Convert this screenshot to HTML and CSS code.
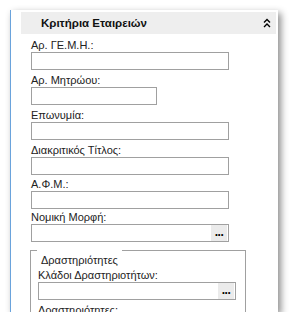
FILE: index.html
```html
<!DOCTYPE html>
<html lang="el">
<head>
    <meta charset="UTF-8">
    <meta name="viewport" content="width=device-width, initial-scale=1.0">
    <title>Κριτήρια Εταιρειών</title>
    <link rel="stylesheet" href="styles.css">
</head>
<body>
    <div class="panel">
        <div class="panel-header">
            <span class="panel-title">Κριτήρια Εταιρειών</span>
            <svg class="collapse-icon" width="8" height="10" viewBox="0 0 8 10">
                <polyline points="1,4.5 4,1.5 7,4.5" />
                <polyline points="1,9 4,6 7,9" />
            </svg>
        </div>

        <div class="panel-body">
            <div class="row">
                <label>Αρ. ΓΕ.Μ.Η.:</label>
                <input type="text" class="field">
            </div>
            <div class="row">
                <label>Αρ. Μητρώου:</label>
                <input type="text" class="field short">
            </div>
            <div class="row">
                <label>Επωνυμία:</label>
                <input type="text" class="field">
            </div>
            <div class="row gap-2">
                <label>Διακριτικός Τίτλος:</label>
                <input type="text" class="field">
            </div>
            <div class="row gap-1">
                <label>Α.Φ.Μ.:</label>
                <input type="text" class="field">
            </div>
            <div class="row">
                <label>Νομική Μορφή:</label>
                <div class="field lookup">
                    <span class="lookup-btn">...</span>
                </div>
            </div>

            <div class="group">
                <div class="group-title">Δραστηριότητες</div>
                <div class="row">
                    <label>Κλάδοι Δραστηριοτήτων:</label>
                    <div class="field lookup">
                        <span class="lookup-btn">...</span>
                    </div>
                </div>
                <div class="row">
                    <label>Δραστηριότητες:</label>
                </div>
            </div>
        </div>
    </div>
</body>
</html>
```

FILE: styles.css
```css
body {
    margin: 0;
    background: #fff;
    font-family: "Liberation Sans", Arial, sans-serif;
    font-size: 11px;
    color: #222;
}

.panel {
    margin: 10px 0 0 10px;
    width: 267px;
    height: 300px;
    padding-top: 2px;
    background: #fff;
    border-left: 1px solid #6aa3dc;
    box-shadow: 3px 3px 7px rgba(0, 0, 0, 0.45);
    overflow: hidden;
}

.panel-header {
    display: flex;
    align-items: center;
    justify-content: space-between;
    height: 22px;
    margin: 0 2px 0 10px;
    padding: 0 5px 0 20px;
    background: #eeeeee;
}

.panel-title {
    font-weight: bold;
    font-size: 11.5px;
    color: #111;
}

.collapse-icon polyline {
    fill: none;
    stroke: #000;
    stroke-width: 1.4;
}

.panel-body {
    padding: 4px 0 0 20px;
}

.row {
    margin-bottom: 3px;
}

.row.gap-2 {
    margin-bottom: 2px;
}

.row.gap-1 {
    margin-bottom: 1px;
}

.row label {
    display: block;
    height: 14px;
    line-height: 14px;
}

.field {
    display: block;
    box-sizing: border-box;
    width: 198px;
    height: 18px;
    margin: 0;
    padding: 0 2px;
    border: 1px solid #a0a0a0;
    border-radius: 0;
    background: #fff;
    font: inherit;
}

.field.short {
    width: 126px;
}

.lookup {
    display: flex;
    justify-content: flex-end;
    padding: 0 1px;
}

.lookup-btn {
    width: 16px;
    height: 16px;
    background: #ebebeb;
    font-weight: bold;
    font-size: 12px;
    line-height: 14px;
    text-align: center;
    letter-spacing: -0.5px;
    color: #000;
}

.group {
    width: 216px;
    height: 80px;
    box-sizing: border-box;
    margin: 8px 0 0 -1px;
    padding: 0 0 0 7px;
    border: 1px solid #a0a0a0;
    border-bottom: none;
}

.group-title {
    width: fit-content;
    margin: -1px 0 1px -1px;
    padding: 3px 4px 0;
    line-height: 14px;
    background: #fff;
}
```
